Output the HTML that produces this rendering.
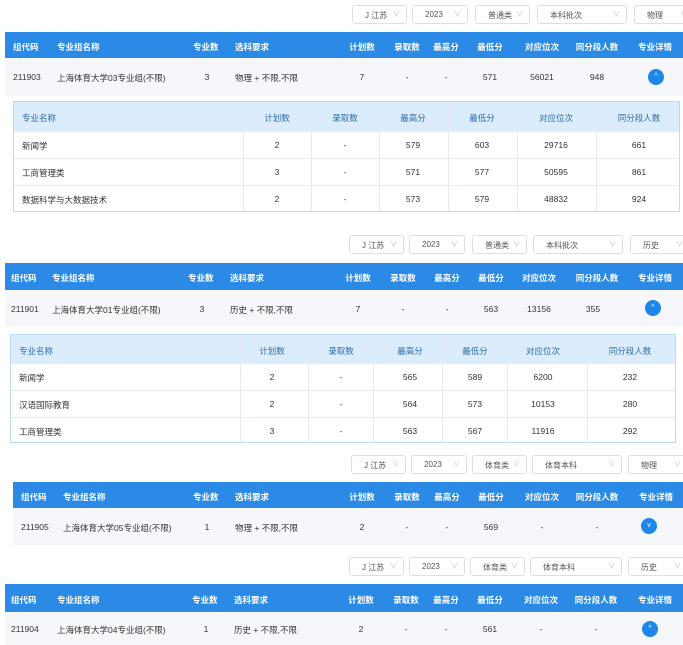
<!DOCTYPE html>
<html><head><meta charset="utf-8"><style>
*{margin:0;padding:0;box-sizing:border-box}
body{width:683px;height:645px;overflow:hidden;background:#fff;font-family:"Liberation Sans","Noto Sans CJK SC",sans-serif;font-size:8.5px;color:#333;position:relative}
.a{position:absolute;white-space:nowrap}
.c{transform:translateX(-50%)}
.sel{position:absolute;height:19px;border:1px solid #dcdfe6;border-radius:3px;background:#fff;font-size:8px;color:#555;padding:4px 0 0 12px}
.sel i{position:absolute;right:6px;top:3px;font-style:normal;color:#bbb;font-size:7px}
.hd{position:absolute;background:#2b8ae6;color:#fff;font-weight:bold}
.row{position:absolute;background:#f5f7fa}
.btn{position:absolute;width:16px;height:16px;border-radius:50%;background:#1f86ea;color:#fff;font-size:7px;text-align:center;line-height:16px}
.sub{position:absolute;border:1px solid #b9dbf5}
.sh{position:absolute;left:0;right:0;top:0;background:#dbedfc;color:#2f6aa8}
.sr{position:absolute;left:0;right:0;border-top:1px solid #e6ebf1}
.vl{position:absolute;top:0;bottom:0;border-left:1px solid #e3eaf2}
</style></head><body>

<!-- Section 1 -->
<div class="sel" style="left:352px;top:5px;width:55px">J 江苏<i>∨</i></div>
<div class="sel" style="left:412px;top:5px;width:56px">2023<i>∨</i></div>
<div class="sel" style="left:475px;top:5px;width:55px">普通类<i>∨</i></div>
<div class="sel" style="left:537px;top:5px;width:90px">本科批次<i>∨</i></div>
<div class="sel" style="left:634px;top:5px;width:60px">物理<i>∨</i></div>
<div class="hd" style="left:5px;top:32px;width:678px;height:26px">
<span class="a" style="left:8px;top:9px">组代码</span><span class="a" style="left:52px;top:9px">专业组名称</span><span class="a" style="left:188px;top:9px">专业数</span><span class="a" style="left:230px;top:9px">选科要求</span><span class="a c" style="left:357px;top:9px">计划数</span><span class="a c" style="left:402px;top:9px">录取数</span><span class="a c" style="left:441px;top:9px">最高分</span><span class="a c" style="left:485px;top:9px">最低分</span><span class="a c" style="left:537px;top:9px">对应位次</span><span class="a c" style="left:592px;top:9px">同分段人数</span><span class="a c" style="left:650px;top:9px">专业详情</span></div>
<div class="row" style="left:5px;top:58px;width:678px;height:38px">
<span class="a" style="left:8px;top:14px">211903</span><span class="a" style="left:52px;top:14px">上海体育大学03专业组(不限)</span><span class="a c" style="left:202px;top:14px">3</span><span class="a" style="left:230px;top:14px">物理 + 不限,不限</span><span class="a c" style="left:357px;top:14px">7</span><span class="a c" style="left:402px;top:14px">-</span><span class="a c" style="left:441px;top:14px">-</span><span class="a c" style="left:485px;top:14px">571</span><span class="a c" style="left:537px;top:14px">56021</span><span class="a c" style="left:592px;top:14px">948</span><div class="btn" style="left:643px;top:11px">^</div></div>
<div class="sub" style="left:13px;top:101px;width:667px;height:111px">
<div class="sh" style="height:29px"></div>
<div class="vl" style="left:229px"></div><div class="vl" style="left:297px"></div><div class="vl" style="left:365px"></div><div class="vl" style="left:434px"></div><div class="vl" style="left:503px"></div><div class="vl" style="left:582px"></div>
<div class="sr" style="top:29px;height:27px"></div><div class="sr" style="top:56px;height:27px"></div><div class="sr" style="top:83px;height:27px"></div>
<span class="a" style="left:8px;top:10px;color:#2f6aa8">专业名称</span><span class="a c" style="left:263px;top:10px;color:#2f6aa8">计划数</span><span class="a c" style="left:331px;top:10px;color:#2f6aa8">录取数</span><span class="a c" style="left:399px;top:10px;color:#2f6aa8">最高分</span><span class="a c" style="left:468px;top:10px;color:#2f6aa8">最低分</span><span class="a c" style="left:542px;top:10px;color:#2f6aa8">对应位次</span><span class="a c" style="left:625px;top:10px;color:#2f6aa8">同分段人数</span>
<span class="a" style="left:8px;top:38px">新闻学</span><span class="a c" style="left:263px;top:38px">2</span><span class="a c" style="left:331px;top:38px">-</span><span class="a c" style="left:399px;top:38px">579</span><span class="a c" style="left:468px;top:38px">603</span><span class="a c" style="left:542px;top:38px">29716</span><span class="a c" style="left:625px;top:38px">661</span>
<span class="a" style="left:8px;top:65px">工商管理类</span><span class="a c" style="left:263px;top:65px">3</span><span class="a c" style="left:331px;top:65px">-</span><span class="a c" style="left:399px;top:65px">571</span><span class="a c" style="left:468px;top:65px">577</span><span class="a c" style="left:542px;top:65px">50595</span><span class="a c" style="left:625px;top:65px">861</span>
<span class="a" style="left:8px;top:92px">数据科学与大数据技术</span><span class="a c" style="left:263px;top:92px">2</span><span class="a c" style="left:331px;top:92px">-</span><span class="a c" style="left:399px;top:92px">573</span><span class="a c" style="left:468px;top:92px">579</span><span class="a c" style="left:542px;top:92px">48832</span><span class="a c" style="left:625px;top:92px">924</span>
</div>

<!-- Section 2 -->
<div class="sel" style="left:349px;top:235px;width:55px">J 江苏<i>∨</i></div>
<div class="sel" style="left:409px;top:235px;width:56px">2023<i>∨</i></div>
<div class="sel" style="left:472px;top:235px;width:55px">普通类<i>∨</i></div>
<div class="sel" style="left:533px;top:235px;width:90px">本科批次<i>∨</i></div>
<div class="sel" style="left:630px;top:235px;width:60px">历史<i>∨</i></div>
<div class="hd" style="left:5px;top:263px;width:678px;height:27px">
<span class="a" style="left:6px;top:9px">组代码</span><span class="a" style="left:47px;top:9px">专业组名称</span><span class="a" style="left:183px;top:9px">专业数</span><span class="a" style="left:225px;top:9px">选科要求</span><span class="a c" style="left:353px;top:9px">计划数</span><span class="a c" style="left:398px;top:9px">录取数</span><span class="a c" style="left:442px;top:9px">最高分</span><span class="a c" style="left:486px;top:9px">最低分</span><span class="a c" style="left:534px;top:9px">对应位次</span><span class="a c" style="left:592px;top:9px">同分段人数</span><span class="a c" style="left:650px;top:9px">专业详情</span></div>
<div class="row" style="left:5px;top:290px;width:678px;height:37px">
<span class="a" style="left:6px;top:14px">211901</span><span class="a" style="left:47px;top:14px">上海体育大学01专业组(不限)</span><span class="a c" style="left:197px;top:14px">3</span><span class="a" style="left:225px;top:14px">历史 + 不限,不限</span><span class="a c" style="left:353px;top:14px">7</span><span class="a c" style="left:398px;top:14px">-</span><span class="a c" style="left:442px;top:14px">-</span><span class="a c" style="left:486px;top:14px">563</span><span class="a c" style="left:534px;top:14px">13156</span><span class="a c" style="left:588px;top:14px">355</span><div class="btn" style="left:640px;top:10px">^</div></div>
<div class="sub" style="left:10px;top:334px;width:666px;height:109px">
<div class="sh" style="height:28px"></div>
<div class="vl" style="left:229px"></div><div class="vl" style="left:297px"></div><div class="vl" style="left:362px"></div><div class="vl" style="left:431px"></div><div class="vl" style="left:496px"></div><div class="vl" style="left:576px"></div>
<div class="sr" style="top:28px;height:27px"></div><div class="sr" style="top:55px;height:27px"></div><div class="sr" style="top:82px;height:27px"></div>
<span class="a" style="left:8px;top:10px;color:#2f6aa8">专业名称</span><span class="a c" style="left:261px;top:10px;color:#2f6aa8">计划数</span><span class="a c" style="left:330px;top:10px;color:#2f6aa8">录取数</span><span class="a c" style="left:399px;top:10px;color:#2f6aa8">最高分</span><span class="a c" style="left:464px;top:10px;color:#2f6aa8">最低分</span><span class="a c" style="left:532px;top:10px;color:#2f6aa8">对应位次</span><span class="a c" style="left:619px;top:10px;color:#2f6aa8">同分段人数</span>
<span class="a" style="left:8px;top:37px">新闻学</span><span class="a c" style="left:261px;top:37px">2</span><span class="a c" style="left:330px;top:37px">-</span><span class="a c" style="left:399px;top:37px">565</span><span class="a c" style="left:464px;top:37px">589</span><span class="a c" style="left:532px;top:37px">6200</span><span class="a c" style="left:619px;top:37px">232</span>
<span class="a" style="left:8px;top:64px">汉语国际教育</span><span class="a c" style="left:261px;top:64px">2</span><span class="a c" style="left:330px;top:64px">-</span><span class="a c" style="left:399px;top:64px">564</span><span class="a c" style="left:464px;top:64px">573</span><span class="a c" style="left:532px;top:64px">10153</span><span class="a c" style="left:619px;top:64px">280</span>
<span class="a" style="left:8px;top:91px">工商管理类</span><span class="a c" style="left:261px;top:91px">3</span><span class="a c" style="left:330px;top:91px">-</span><span class="a c" style="left:399px;top:91px">563</span><span class="a c" style="left:464px;top:91px">567</span><span class="a c" style="left:532px;top:91px">11916</span><span class="a c" style="left:619px;top:91px">292</span>
</div>

<!-- Section 3 -->
<div class="sel" style="left:351px;top:455px;width:55px">J 江苏<i>∨</i></div>
<div class="sel" style="left:411px;top:455px;width:56px">2023<i>∨</i></div>
<div class="sel" style="left:472px;top:455px;width:55px">体育类<i>∨</i></div>
<div class="sel" style="left:532px;top:455px;width:90px">体育本科<i>∨</i></div>
<div class="sel" style="left:628px;top:455px;width:60px">物理<i>∨</i></div>
<div class="hd" style="left:13px;top:482px;width:670px;height:26px">
<span class="a" style="left:8px;top:9px">组代码</span><span class="a" style="left:50px;top:9px">专业组名称</span><span class="a" style="left:180px;top:9px">专业数</span><span class="a" style="left:222px;top:9px">选科要求</span><span class="a c" style="left:349px;top:9px">计划数</span><span class="a c" style="left:394px;top:9px">录取数</span><span class="a c" style="left:434px;top:9px">最高分</span><span class="a c" style="left:478px;top:9px">最低分</span><span class="a c" style="left:529px;top:9px">对应位次</span><span class="a c" style="left:584px;top:9px">同分段人数</span><span class="a c" style="left:643px;top:9px">专业详情</span></div>
<div class="row" style="left:13px;top:508px;width:670px;height:37px">
<span class="a" style="left:8px;top:14px">211905</span><span class="a" style="left:50px;top:14px">上海体育大学05专业组(不限)</span><span class="a c" style="left:194px;top:14px">1</span><span class="a" style="left:222px;top:14px">物理 + 不限,不限</span><span class="a c" style="left:349px;top:14px">2</span><span class="a c" style="left:394px;top:14px">-</span><span class="a c" style="left:434px;top:14px">-</span><span class="a c" style="left:478px;top:14px">569</span><span class="a c" style="left:529px;top:14px">-</span><span class="a c" style="left:584px;top:14px">-</span><div class="btn" style="left:628px;top:10px">v</div></div>

<!-- Section 4 -->
<div class="sel" style="left:349px;top:557px;width:55px">J 江苏<i>∨</i></div>
<div class="sel" style="left:409px;top:557px;width:56px">2023<i>∨</i></div>
<div class="sel" style="left:470px;top:557px;width:55px">体育类<i>∨</i></div>
<div class="sel" style="left:530px;top:557px;width:92px">体育本科<i>∨</i></div>
<div class="sel" style="left:628px;top:557px;width:60px">历史<i>∨</i></div>
<div class="hd" style="left:5px;top:584px;width:678px;height:28px">
<span class="a" style="left:6px;top:10px">组代码</span><span class="a" style="left:52px;top:10px">专业组名称</span><span class="a" style="left:187px;top:10px">专业数</span><span class="a" style="left:229px;top:10px">选科要求</span><span class="a c" style="left:356px;top:10px">计划数</span><span class="a c" style="left:401px;top:10px">录取数</span><span class="a c" style="left:441px;top:10px">最高分</span><span class="a c" style="left:485px;top:10px">最低分</span><span class="a c" style="left:536px;top:10px">对应位次</span><span class="a c" style="left:591px;top:10px">同分段人数</span><span class="a c" style="left:650px;top:10px">专业详情</span></div>
<div class="row" style="left:5px;top:612px;width:678px;height:33px">
<span class="a" style="left:6px;top:12px">211904</span><span class="a" style="left:52px;top:12px">上海体育大学04专业组(不限)</span><span class="a c" style="left:201px;top:12px">1</span><span class="a" style="left:229px;top:12px">历史 + 不限,不限</span><span class="a c" style="left:356px;top:12px">2</span><span class="a c" style="left:401px;top:12px">-</span><span class="a c" style="left:441px;top:12px">-</span><span class="a c" style="left:485px;top:12px">561</span><span class="a c" style="left:536px;top:12px">-</span><span class="a c" style="left:591px;top:12px">-</span><div class="btn" style="left:637px;top:9px">^</div></div>
</body></html>
